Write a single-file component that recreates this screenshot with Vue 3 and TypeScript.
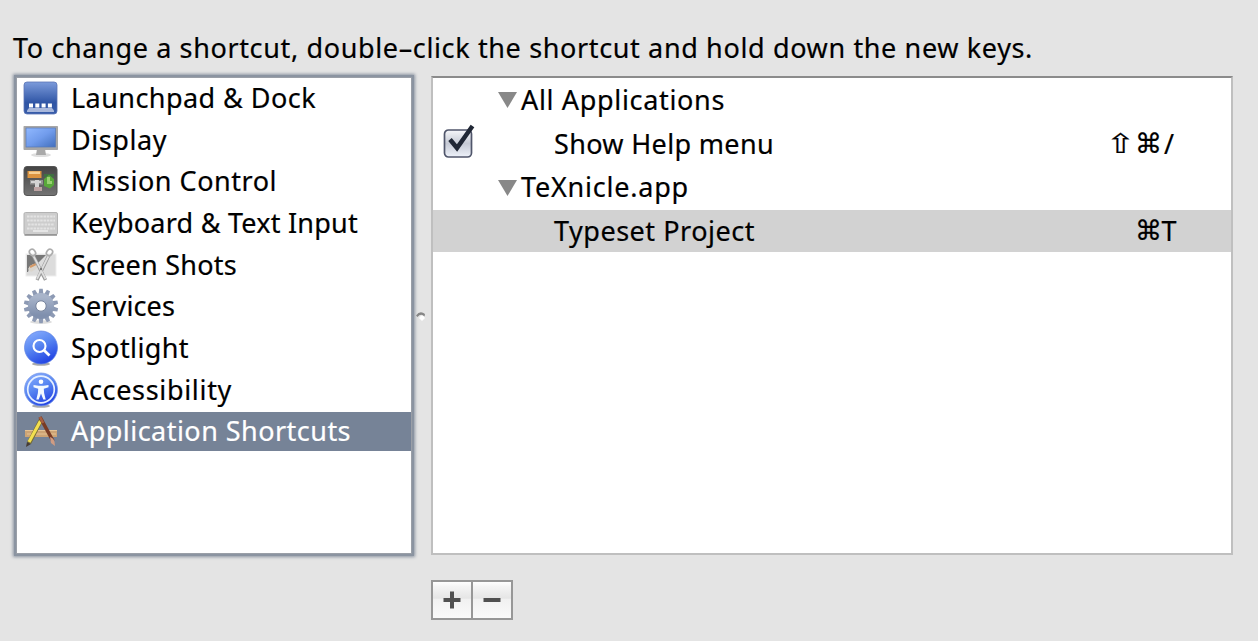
<script setup lang="ts">
import { nextTick } from 'vue'

interface Category { icon: string; label: string; width: number; selected?: boolean }

const categories: Category[] = [
  { icon: 'dock', label: 'Launchpad & Dock', width: 245 },
  { icon: 'display', label: 'Display', width: 96 },
  { icon: 'mission', label: 'Mission Control', width: 206 },
  { icon: 'keyboard', label: 'Keyboard & Text Input', width: 287 },
  { icon: 'shots', label: 'Screen Shots', width: 166 },
  { icon: 'services', label: 'Services', width: 104 },
  { icon: 'spotlight', label: 'Spotlight', width: 118 },
  { icon: 'access', label: 'Accessibility', width: 161 },
  { icon: 'apps', label: 'Application Shortcuts', width: 280, selected: true },
]

interface Row { label: string; width: number; group?: boolean; checked?: boolean; keys?: string[]; selected?: boolean }

const rows: Row[] = [
  { label: 'All Applications', width: 204, group: true },
  { label: 'Show Help menu', width: 220, checked: true, keys: ['⇧', '⌘', '/'] },
  { label: 'TeXnicle.app', width: 168, group: true },
  { label: 'Typeset Project', width: 201, keys: ['⌘', 'T'], selected: true },
]

const teeth = Array.from({ length: 14 }, (_, i) => i * (360 / 14))

function keyClass(k: string): string {
  if (k === '⇧') return 'symbol shift'
  return k === '⌘' ? 'symbol' : 'char'
}

// Tracks a label out so that it spans the given advance width.
const vFit = {
  mounted(el: HTMLElement, binding: { value: number }) {
    const apply = () => {
      el.style.letterSpacing = '0px'
      const count = (el.textContent ?? '').length
      const natural = el.getBoundingClientRect().width
      el.style.letterSpacing = `${(binding.value - natural) / count}px`
    }
    nextTick(apply)
  },
}
</script>

<template>
  <main class="pane">
    <p class="hint"><span v-fit="1020">To change a shortcut, double–click the shortcut and hold down the new keys.</span></p>
    <div class="columns">
      <ul class="categories">
        <li v-for="c in categories" :key="c.label" class="category" :class="{ selected: c.selected }">
          <svg class="icon" viewBox="0 0 36 36">
            <template v-if="c.icon === 'dock'">
              <rect x="1" y="2" width="33" height="32" rx="3" fill="url(#gDock)" stroke="#5a75b5" stroke-width=".8" />
              <path d="M4 30.500L6 28H29L31 30.500V32H4Z" fill="#a9b8dc" />
              <path d="M6 23.500h4v4H6zM12.300 23.500h4v4h-4zM18.600 23.500h4v4h-4zM24.900 23.500h4v4h-4z" fill="#fff" />
            </template>
            <template v-else-if="c.icon === 'display'">
              <ellipse cx="18" cy="33" rx="10" ry="2" fill="#dedede" />
              <path d="M14 27h8l1 6H13z" fill="#a9a9a9" />
              <rect x=".5" y="4" width="34.500" height="24" rx=".8" fill="#a7a7a7" />
              <rect x="3" y="6" width="29.500" height="19" fill="url(#gScreen)" stroke="#5878b5" stroke-width=".7" />
            </template>
            <template v-else-if="c.icon === 'mission'">
              <rect x="1" y="3.500" width="33" height="29" rx="3" fill="url(#gMission)" stroke="#555" />
              <rect x="4.500" y="8" width="14" height="7" fill="#dc9440" />
              <path d="M6 8.500h11v2.500H6z" fill="#f6d094" />
              <path d="M21 11h10v3H21z" fill="#3f6f42" />
              <path d="M21 16l5-4 5 4v6l-4 3.500-6-2.500z" fill="#58a83a" />
              <path d="M24 14h3v4h2v3h-5z" fill="#98d072" />
              <path d="M7 17h13v4.500H7z" fill="#949494" />
              <path d="M8 18h10v2H8zM12 17h4v11h-4z" fill="#d4d4d4" />
              <path d="M11 24h8v4h-8z" fill="#bda3a3" />
            </template>
            <template v-else-if="c.icon === 'keyboard'">
              <rect x="1" y="7.500" width="33.500" height="22" rx="1.500" fill="#cdcdcd" stroke="#b3b3b3" />
              <path d="M1.500 30h32.500" stroke="#8d8d8d" stroke-width="1.500" />
              <path d="M4 11.500h28M4 15.500h28M5 19.500h26M4 23.500h28" stroke="#e3e3e3" stroke-width="2" stroke-dasharray="2.500 .8" />
              <path d="M10 26h15" stroke="#eee" stroke-width="1.500" />
            </template>
            <template v-else-if="c.icon === 'shots'">
              <rect x="3" y="7" width="30" height="22" fill="#dcdcdc" stroke="#eee" />
              <path d="M4 8h19l-7 7-9 4-2 6H4z" fill="#777" />
              <path d="M5 22q4-7 11-4l-3 4-5 3z" fill="#dad5cd" />
              <path d="M7 20l6-3" stroke="#d59a68" stroke-width="2" />
              <path d="M10 8L22.500 33M26 8L14 33" stroke="#9a9a9a" stroke-width="3.300" />
              <path d="M10 8L22.500 32M26 8L14 32" stroke="#dedede" stroke-width="1.800" />
              <g fill="none" stroke="#adadad" stroke-width="1.700"><ellipse cx="9.500" cy="5.500" rx="2.800" ry="3.500" transform="rotate(-35 9.500 5.500)" /><ellipse cx="26.500" cy="5.500" rx="2.800" ry="3.500" transform="rotate(35 26.500 5.500)" /></g>
              <circle cx="18" cy="22" r="1.200" fill="#777" />
            </template>
            <template v-else-if="c.icon === 'services'">
              <ellipse cx="18" cy="34" rx="11" ry="1.700" fill="#ddd" />
              <g fill="#8d9ab4"><path v-for="a in teeth" :key="a" d="M16.300 .8h3.400l.9 7h-5.200z" :transform="`rotate(${a} 18 18)`" /></g>
              <circle cx="18" cy="18" r="9" fill="none" stroke="url(#gGear)" stroke-width="8" />
              <circle cx="18" cy="18" r="5.200" fill="#fff" stroke="#76839c" />
            </template>
            <template v-else-if="c.icon === 'spotlight'">
              <ellipse cx="18" cy="34" rx="9" ry="1.700" fill="#aaa" />
              <circle cx="18" cy="17.500" r="16.500" fill="url(#gBlue)" stroke="#5f83e4" stroke-width=".7" />
              <circle cx="16.500" cy="16" r="6" fill="none" stroke="#fff" stroke-width="2.100" />
              <path d="M21 20.300L26.500 25.500" stroke="#fff" stroke-width="2.800" />
            </template>
            <template v-else-if="c.icon === 'access'">
              <ellipse cx="18" cy="34" rx="9" ry="1.700" fill="#aaa" />
              <circle cx="18" cy="17.500" r="16.500" fill="url(#gBlue)" stroke="#7899e8" stroke-width=".8" />
              <circle cx="18" cy="17.500" r="13.300" fill="none" stroke="#e6f0ff" stroke-width="1.700" />
              <circle cx="18" cy="9.800" r="2.300" fill="#fff" />
              <path d="M10.500 13l5 .8h5l5-.8v2.200l-4.700 1.500.3 4.300 1.600 6.500h-2.400L18 21.500l-2.300 6h-2.400l1.600-6.500.3-4.300-4.700-1.500z" fill="#f4faff" />
            </template>
            <template v-else>
              <path d="M2 17h32v7H2z" fill="#cda475" /><path d="M2 17.500h32M4 21h29" stroke="#e6c394" />
              <path d="M18.500 6L6 30" stroke="#756c35" stroke-width="4.600" />
              <path d="M17.500 8L6 29" stroke="#f3df50" stroke-width="3.200" />
              <path d="M4 29l4 2-5 3z" fill="#463c35" />
              <path d="M17 4L30 28" stroke="#793b24" stroke-width="3.600" />
              <path d="M17 4l3 6" stroke="#a75f42" stroke-width="2.600" />
              <path d="M27 24q5 1 5 9l-4-3z" fill="#d09c83" />
            </template>
          </svg>
          <span v-fit="c.width" class="label">{{ c.label }}</span>
        </li>
      </ul>
      <div class="splitter">
        <svg class="grip" viewBox="0 0 10 11"><path d="M0 5.500Q4 0 9 4L8.500 6.500Q5 3 1.500 7z" fill="#868686" /><path d="M3 8q3-5 6 0l-3 3z" fill="#fff" /></svg>
      </div>
      <section class="right">
        <div class="shortcuts">
          <div v-for="r in rows" :key="r.label" class="row" :class="{ group: r.group, selected: r.selected }">
            <span class="check">
              <svg v-if="r.checked" class="box" viewBox="0 0 34 36">
                <rect x="2.500" y="7" width="27" height="27" rx="4" fill="url(#gBox)" stroke="#50566b" stroke-width="1.700" />
                <path d="M8 16.500l7 8.500L30.500 3" fill="none" stroke="#202735" stroke-width="4.500" />
              </svg>
            </span>
            <svg v-if="r.group" class="triangle" viewBox="0 0 19 16"><path d="M0 0H19L9.500 16Z" fill="#888" /></svg>
            <span v-fit="r.width" class="label">{{ r.label }}</span>
            <span v-if="r.keys" class="keys"><span v-for="k in r.keys" :key="k" :class="keyClass(k)">{{ k }}</span></span>
          </div>
        </div>
        <div class="buttons">
          <button type="button" aria-label="Add"><svg viewBox="0 0 18 18"><path d="M9 .5v17M.5 9h17" stroke="#505050" stroke-width="4" /></svg></button>
          <button type="button" aria-label="Remove"><svg viewBox="0 0 18 18"><path d="M.5 9h17" stroke="#505050" stroke-width="4" /></svg></button>
        </div>
      </section>
    </div>
    <svg class="defs" width="0" height="0">
      <defs>
        <linearGradient id="gDock" x2="0" y2="1"><stop stop-color="#7c9bdb" /><stop offset=".65" stop-color="#2f55a5" /><stop offset="1" stop-color="#395da9" /></linearGradient>
        <linearGradient id="gScreen" x2="1" y2="1"><stop stop-color="#91b9ff" /><stop offset=".5" stop-color="#719cec" /><stop offset="1" stop-color="#426fbd" /></linearGradient>
        <linearGradient id="gMission" x2="0" y2="1"><stop stop-color="#444" /><stop offset="1" stop-color="#737373" /></linearGradient>
        <linearGradient id="gGear" x2="0" y2="1"><stop stop-color="#a8b4ca" /><stop offset="1" stop-color="#8090ae" /></linearGradient>
        <linearGradient id="gBlue" x2=".5" y2="1"><stop stop-color="#8fb2ff" /><stop offset=".5" stop-color="#5b89f2" /><stop offset="1" stop-color="#2648e4" /></linearGradient>
        <linearGradient id="gBox" x2="0" y2="1"><stop stop-color="#f6f7fa" /><stop offset=".5" stop-color="#c6cad5" /><stop offset="1" stop-color="#eef2fa" /></linearGradient>
      </defs>
    </svg>
  </main>
</template>

<style>
body { margin: 0; background: #e4e4e4; }
</style>

<style scoped>
.pane { box-sizing: border-box; width: 1258px; height: 641px; padding: 28px 0 0 13px; overflow: hidden; background: #e4e4e4; color: #000; font: 27px/40px "Noto Sans", "Open Sans", sans-serif; white-space: nowrap; -webkit-text-stroke: .2px currentColor; }
.hint { margin: 0; height: 48px; }
.columns { display: flex; }
.categories { box-sizing: border-box; width: 394px; height: 475px; margin: 2px 0 0 4px; padding: 0; list-style: none; background: #fff; box-shadow: 0 0 0 1px #9a9fa7, 0 0 0 3px #8b94a1, 0 0 3px 4px #8b94a1; }
.category { display: flex; align-items: center; height: 39.700px; margin-bottom: 2px; }
.category.selected { background: #768397; color: #fff; }
.icon { flex: none; width: 36px; height: 36px; margin: 0 12px 0 6px; }
.splitter { width: 20px; }
.grip { display: block; width: 10px; height: 11px; margin: 234px 0 0 5px; }
.shortcuts { box-sizing: border-box; width: 802px; height: 479px; padding-top: 1px; background: #fff; border: 2px solid #bfbfbf; border-top-color: #8b8b8b; }
.row { display: flex; align-items: center; height: 41.700px; margin-bottom: 2px; }
.row.selected { background: #d2d2d2; }
.check { width: 121px; display: flex; }
.group .check { width: 65px; }
.box { width: 34px; height: 36px; margin: -6px 0 0 9px; }
.triangle { width: 19px; height: 16px; margin: 1px 4px 0 0; }
.keys { display: flex; margin-left: auto; margin-right: 54px; }
.symbol { width: 26px; font-family: "DejaVu Sans", sans-serif; font-size: 27px; -webkit-text-stroke-width: .2px; }
.shift { transform: scaleX(1.3); transform-origin: 40% 50%; }
.char { width: 16px; text-align: center; }
.buttons { display: flex; width: 82px; box-sizing: border-box; height: 40px; margin-top: 25px; border: 2px solid #979797; }
button { display: flex; flex: 1; align-items: center; justify-content: center; margin: 0; padding: 0; border: 0; background: linear-gradient(#fff 0, #f5f5f5 12%, #e5e5e5 45%, #f1f1f1 48%, #fafafa); }
button + button { border-left: 2px solid #979797; }
button svg { width: 18px; height: 18px; }
.defs { display: block; }
</style>
